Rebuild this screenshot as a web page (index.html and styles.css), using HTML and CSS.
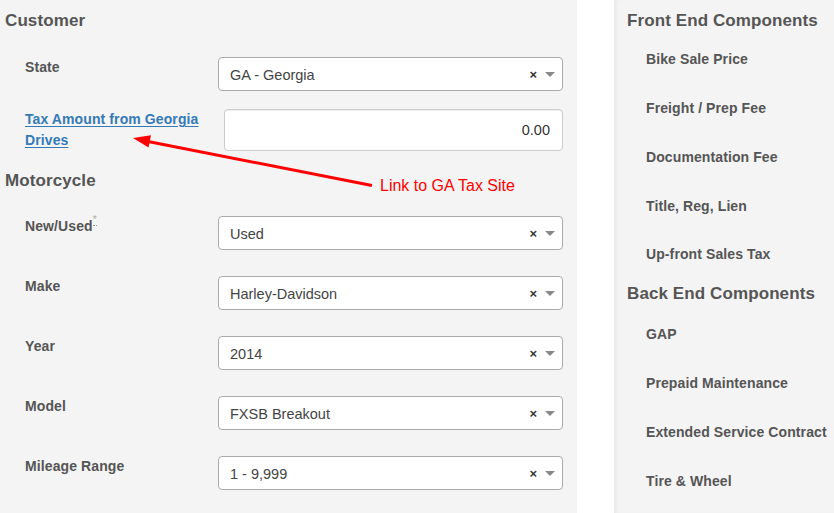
FILE: index.html
```html
<!DOCTYPE html>
<html>
<head>
<meta charset="utf-8">
<link rel="stylesheet" href="styles.css">
</head>
<body>
<div class="page">
  <div class="left">
    <h2 class="section">Customer</h2>
    <div class="row">
      <div class="label">State</div>
      <div class="select"><span class="value">GA - Georgia</span><span class="clear">×</span><span class="caret"></span></div>
    </div>
    <div class="row row-tax">
      <div class="label label-tax"><a href="#" class="link">Tax Amount from Georgia Drives</a></div>
      <div class="input"><span>0.00</span></div>
    </div>
    <h2 class="section section-moto">Motorcycle</h2>
    <div class="row row-first">
      <div class="label">New/Used<abbr class="req" title="required">*</abbr></div>
      <div class="select"><span class="value">Used</span><span class="clear">×</span><span class="caret"></span></div>
    </div>
    <div class="row">
      <div class="label">Make</div>
      <div class="select"><span class="value">Harley-Davidson</span><span class="clear">×</span><span class="caret"></span></div>
    </div>
    <div class="row">
      <div class="label">Year</div>
      <div class="select"><span class="value">2014</span><span class="clear">×</span><span class="caret"></span></div>
    </div>
    <div class="row">
      <div class="label">Model</div>
      <div class="select"><span class="value">FXSB Breakout</span><span class="clear">×</span><span class="caret"></span></div>
    </div>
    <div class="row">
      <div class="label">Mileage Range</div>
      <div class="select"><span class="value">1 - 9,999</span><span class="clear">×</span><span class="caret"></span></div>
    </div>
  </div>
  <div class="right">
    <h2 class="section">Front End Components</h2>
    <ul class="items">
      <li>Bike Sale Price</li>
      <li>Freight / Prep Fee</li>
      <li>Documentation Fee</li>
      <li>Title, Reg, Lien</li>
      <li>Up-front Sales Tax</li>
    </ul>
    <h2 class="section section-back">Back End Components</h2>
    <ul class="items items-back">
      <li>GAP</li>
      <li>Prepaid Maintenance</li>
      <li>Extended Service Contract</li>
      <li>Tire &amp; Wheel</li>
    </ul>
  </div>
</div>
<svg class="annot-arrow" width="834" height="513" viewBox="0 0 834 513">
  <line x1="372" y1="185.5" x2="148" y2="141.5" stroke="#ff0000" stroke-width="3"/>
  <polygon points="133,138 151,135.2 148.5,147.4" fill="#ff0000"/>
</svg>
<div class="annot-text">Link to GA Tax Site</div>
</body>
</html>
```

FILE: styles.css
```css
html, body {
  margin: 0;
  padding: 0;
  background: #ffffff;
  font-family: "Liberation Sans", Arial, sans-serif;
}
body {
  width: 834px;
  height: 513px;
  overflow: hidden;
  position: relative;
}
.page {
  display: flex;
  height: 513px;
}
.left {
  width: 577px;
  flex: 0 0 577px;
  background: #f4f4f4;
  padding-top: 11px;
  box-sizing: border-box;
}
.right {
  margin-left: 37px;
  flex: 1;
  background: #f4f4f4;
  padding-top: 11px;
  padding-left: 13px;
  box-sizing: border-box;
  box-shadow: inset 4px 0 4px -2px rgba(0, 0, 0, 0.05);
  white-space: nowrap;
}
.section {
  margin: 0;
  font-size: 17px;
  line-height: 20px;
  font-weight: bold;
  color: #555555;
  padding-left: 5px;
  letter-spacing: 0.1px;
}
.right .section {
  padding-left: 0;
}
.section-moto {
  margin-top: 20px;
}
.row {
  display: flex;
  align-items: flex-start;
  padding-left: 25px;
  margin-top: 26px;
}
.row:first-of-type {
  margin-top: 26px;
}
.row-tax {
  margin-top: 18px;
}
.row-first {
  margin-top: 25px;
}
.label {
  width: 193px;
  flex: 0 0 193px;
  font-size: 14px;
  line-height: 20px;
  font-weight: bold;
  color: #555555;
  letter-spacing: 0.1px;
}
.label-tax {
  width: 199px;
  flex: 0 0 199px;
  line-height: 21px;
}
.link {
  display: inline-block;
  width: 185px;
  color: #337ab7;
  text-decoration: underline;
  text-underline-offset: 2px;
}
.req {
  font-size: 10px;
  font-weight: normal;
  color: #aaaaaa;
  vertical-align: top;
  position: relative;
  top: -2px;
  text-decoration: none;
  border-bottom: 1px dotted #999;
  line-height: 12px;
}
.select {
  width: 345px;
  flex: 0 0 345px;
  height: 34px;
  box-sizing: border-box;
  border: 1px solid #aaaaaa;
  border-radius: 4px;
  background: #ffffff;
  display: flex;
  align-items: center;
  padding: 1px 7px 0 11px;
}
.value {
  flex: 1;
  font-size: 14.5px;
  color: #444444;
}
.clear {
  font-size: 13px;
  font-weight: bold;
  color: #333333;
  margin-right: 8px;
  line-height: 1;
}
.caret {
  width: 0;
  height: 0;
  border-top: 5px solid #888888;
  border-left: 5px solid transparent;
  border-right: 5px solid transparent;
}
.input {
  width: 339px;
  flex: 0 0 339px;
  height: 42px;
  box-sizing: border-box;
  border: 1px solid #cccccc;
  border-radius: 4px;
  background: #ffffff;
  box-shadow: inset 0 1px 1px rgba(0, 0, 0, 0.075);
  display: flex;
  align-items: center;
  justify-content: flex-end;
  padding-right: 12px;
  font-size: 14.5px;
  color: #333333;
}
.items {
  list-style: none;
  margin: 0;
  padding: 0 0 0 19px;
}
.items li {
  font-size: 14px;
  line-height: 20px;
  font-weight: bold;
  color: #555555;
  margin-top: 29px;
  letter-spacing: 0.1px;
}
.items li:first-child {
  margin-top: 18px;
}
.items li:last-child {
  margin-top: 28px;
}
.section-back {
  margin-top: 20px;
}
.items-back li:first-child {
  margin-top: 20px;
}
.items-back li:last-child {
  margin-top: 29px;
}
.annot-arrow {
  position: absolute;
  left: 0;
  top: 0;
  pointer-events: none;
}
.annot-text {
  position: absolute;
  left: 380px;
  top: 177px;
  font-size: 16px;
  line-height: 18px;
  color: #ff0000;
}
```
